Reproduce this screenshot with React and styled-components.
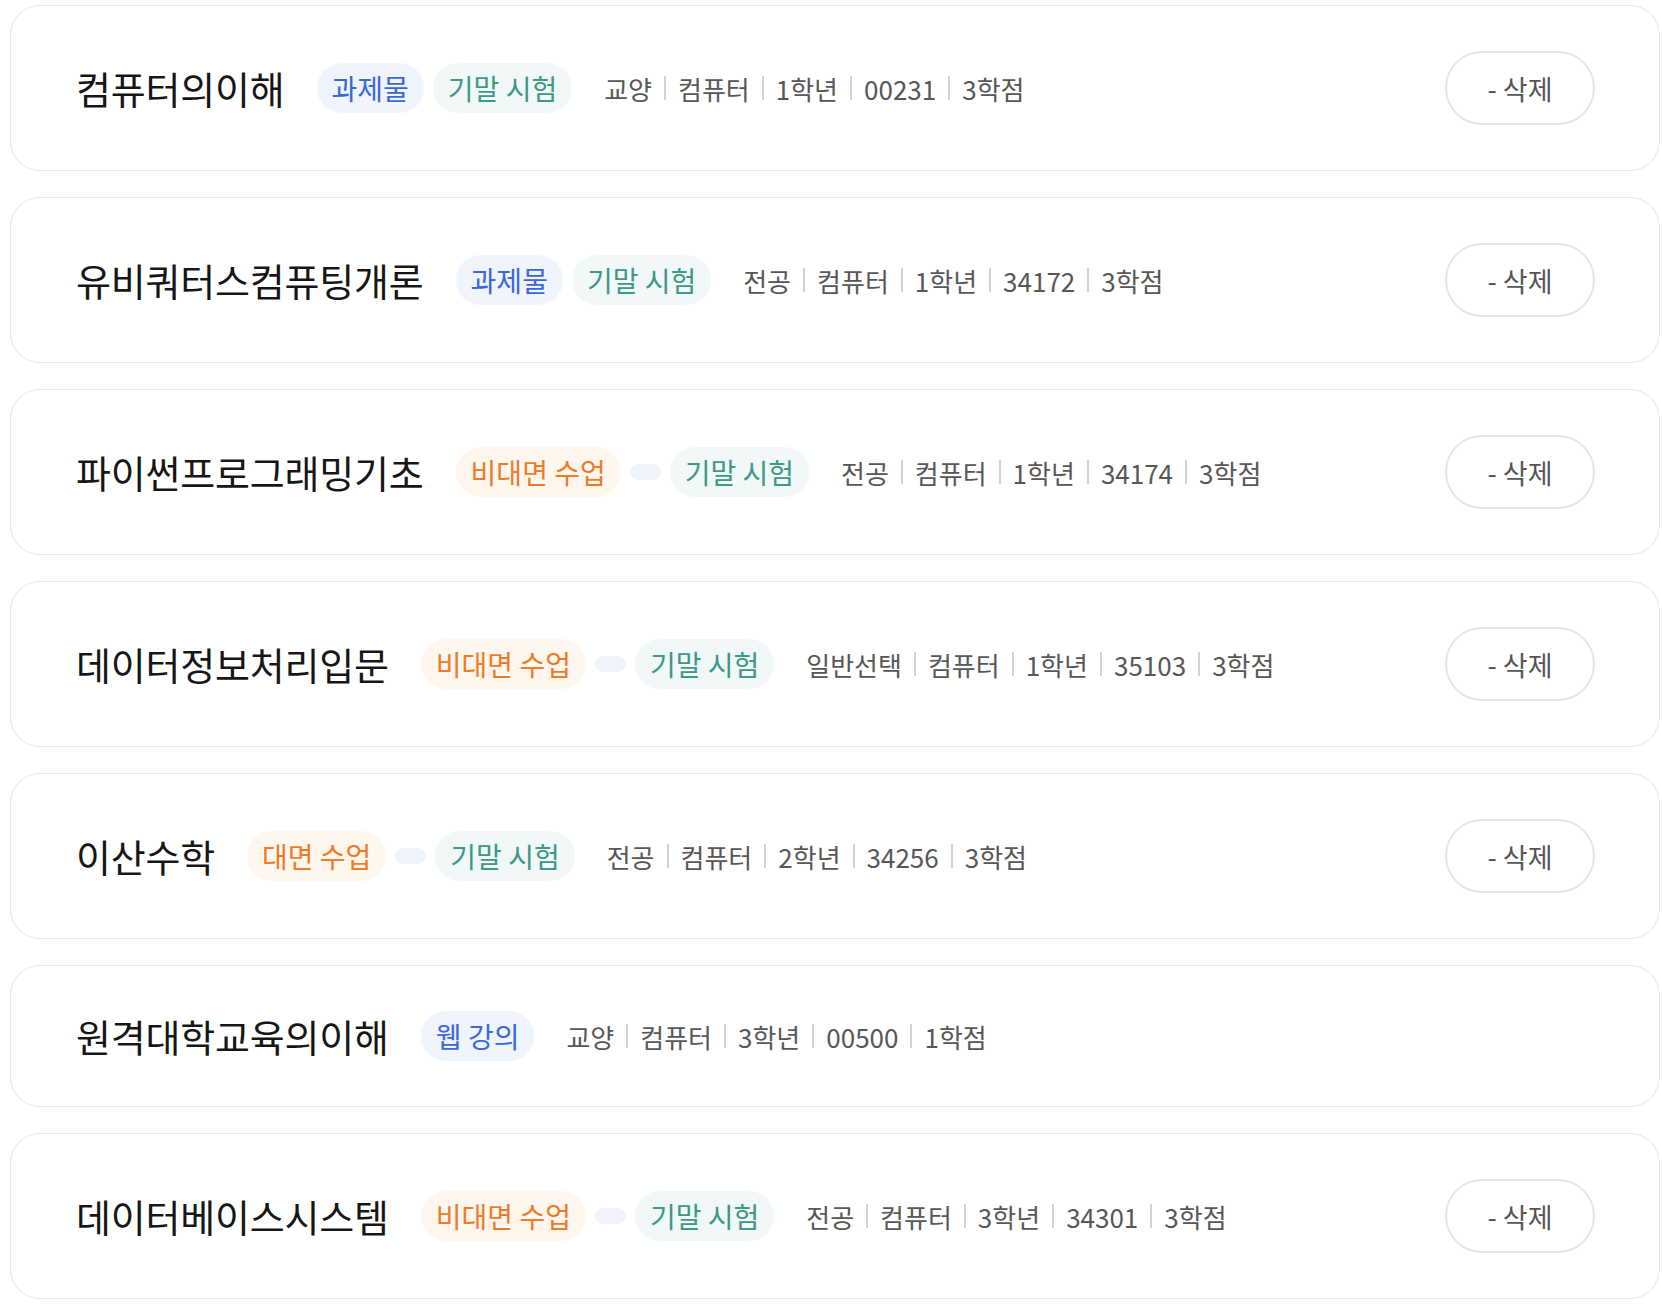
import React from 'react'
import styled, { createGlobalStyle } from 'styled-components'

const GlobalStyle = createGlobalStyle`
  body {
    margin: 0;
    background: #ffffff;
    font-family: "Noto Sans CJK KR", "Noto Sans", sans-serif;
  }
`

const courses = [
  { title: '컴퓨터의이해', tags: ['task', 'exam'], meta: ['교양', '컴퓨터', '1학년', '00231', '3학점'], removable: true },
  { title: '유비쿼터스컴퓨팅개론', tags: ['task', 'exam'], meta: ['전공', '컴퓨터', '1학년', '34172', '3학점'], removable: true },
  { title: '파이썬프로그래밍기초', tags: ['online', 'dot', 'exam'], meta: ['전공', '컴퓨터', '1학년', '34174', '3학점'], removable: true },
  { title: '데이터정보처리입문', tags: ['online', 'dot', 'exam'], meta: ['일반선택', '컴퓨터', '1학년', '35103', '3학점'], removable: true },
  { title: '이산수학', tags: ['offline', 'dot', 'exam'], meta: ['전공', '컴퓨터', '2학년', '34256', '3학점'], removable: true },
  { title: '원격대학교육의이해', tags: ['web'], meta: ['교양', '컴퓨터', '3학년', '00500', '1학점'], removable: false },
  { title: '데이터베이스시스템', tags: ['online', 'dot', 'exam'], meta: ['전공', '컴퓨터', '3학년', '34301', '3학점'], removable: true },
]

const tagInfo = {
  task: { label: '과제물', tone: 'blue' },
  exam: { label: '기말 시험', tone: 'teal' },
  online: { label: '비대면 수업', tone: 'orange' },
  offline: { label: '대면 수업', tone: 'orange' },
  web: { label: '웹 강의', tone: 'blue' },
}

const tones = {
  blue: { fg: '#3a68d8', bg: '#eff4fd' },
  teal: { fg: '#3b9986', bg: '#f2f7f8' },
  orange: { fg: '#ed7b29', bg: '#fff6ee' },
}

const App = () => {
  return (
    <>
      <GlobalStyle />
      <List>
        {courses.map((c) => (
          <Card key={c.title}>
            <Info>
              <Title>{c.title}</Title>
              <Tags>
                {c.tags.map((t, i) =>
                  t === 'dot' ? (
                    <Dot key={i} />
                  ) : (
                    <Tag key={i} $tone={tagInfo[t].tone}>{tagInfo[t].label}</Tag>
                  )
                )}
              </Tags>
              <Meta>
                {c.meta.map((m, i) => (
                  <React.Fragment key={i}>
                    {i > 0 && <Divider />}
                    <span>{m}</span>
                  </React.Fragment>
                ))}
              </Meta>
            </Info>
            {c.removable && <RemoveButton>- 삭제</RemoveButton>}
          </Card>
        ))}
      </List>
    </>
  )
}

const List = styled.div`
  display: flex;
  flex-direction: column;
  gap: 26px;
  padding: 5px 2px 5px 10px;
`

const Card = styled.div`
  display: flex;
  align-items: center;
  justify-content: space-between;
  padding: 45px 64px 45px 65px;
  border: 1px solid #e6e6e6;
  border-radius: 30px;
  background: #fff;
`

const Info = styled.div`
  display: flex;
  align-items: center;
  gap: 32px;
  min-height: 50px;
`

const Title = styled.h2`
  margin: 0;
  font-size: 38px;
  font-weight: 400;
  color: #161616;
  letter-spacing: -0.2px;
  line-height: 1;
`

const Tags = styled.div`
  display: flex;
  align-items: center;
  gap: 9px;
`

const Tag = styled.span`
  display: inline-flex;
  align-items: center;
  height: 50px;
  padding: 0 15px;
  border-radius: 25px;
  font-size: 28px;
  font-weight: 400;
  color: ${(p) => tones[p.$tone].fg};
  background: ${(p) => tones[p.$tone].bg};
  white-space: nowrap;
`

const Dot = styled.span`
  width: 31px;
  height: 16px;
  border-radius: 8px;
  background: #eff4fb;
`

const Meta = styled.div`
  display: flex;
  align-items: center;
  font-size: 26px;
  color: #575757;
  white-space: nowrap;
`

const Divider = styled.span`
  width: 2px;
  height: 24px;
  margin: 0 12px;
  background: #d2d2d2;
`

const RemoveButton = styled.button`
  width: 150px;
  height: 74px;
  border: 2px solid #e6e6e6;
  border-radius: 37px;
  background: #fff;
  font-family: inherit;
  font-size: 27px;
  color: #555;
  cursor: pointer;
`

export default App
